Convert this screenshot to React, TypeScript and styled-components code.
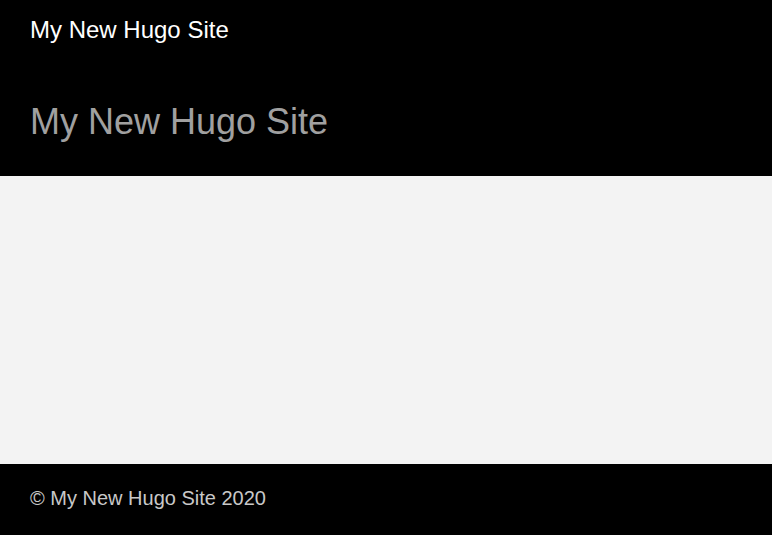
import React from "react";
import styled, { createGlobalStyle } from "styled-components";

const Global = createGlobalStyle`
  html, body { margin: 0; padding: 0; background: #f3f3f3; }
  body { font-family: "Liberation Sans", Arial, sans-serif; }
`;

const Page = styled.div`
  display: flex;
  flex-direction: column;
  min-height: 535px;
`;

const Header = styled.header`
  background: #000;
  height: 176px;
  box-sizing: border-box;
  padding: 16px 30px 0;
  display: flex;
  flex-direction: column;
`;

const Brand = styled.a`
  color: #fff;
  font-size: 24px;
  line-height: 28px;
  text-decoration: none;
`;

const Title = styled.h1`
  margin: 57px 0 0;
  color: #a0a0a0;
  font-size: 36px;
  font-weight: 400;
  line-height: 42px;
`;

const Main = styled.main`
  flex: 1;
  background: #f3f3f3;
`;

const Footer = styled.footer`
  background: #000;
  height: 71px;
  box-sizing: border-box;
  padding: 23px 30px 0;
  color: #c8c8c8;
  font-size: 20px;
  line-height: 23px;
`;

export default function App() {
  return (
    <>
      <Global />
      <Page>
        <Header>
          <Brand href="#">My New Hugo Site</Brand>
          <Title>My New Hugo Site</Title>
        </Header>
        <Main />
        <Footer>© My New Hugo Site 2020</Footer>
      </Page>
    </>
  );
}
